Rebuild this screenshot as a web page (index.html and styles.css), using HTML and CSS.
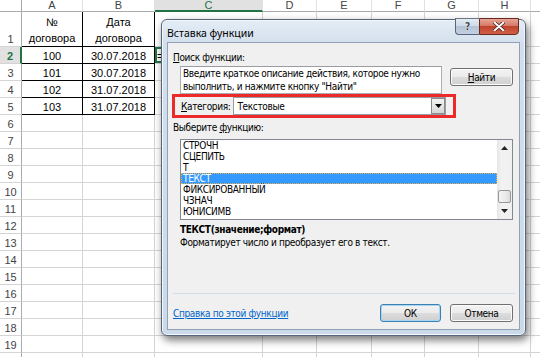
FILE: index.html
```html
<!DOCTYPE html>
<html lang="ru">
<head>
<meta charset="utf-8">
<title>Вставка функции</title>
<link rel="stylesheet" href="styles.css">
</head>
<body>
<div class="sheet">
  <div class="ch corner"></div><div class="ch">A</div><div class="ch">B</div><div class="ch selc">C</div><div class="ch">D</div><div class="ch">E</div><div class="ch">F</div><div class="ch">G</div><div class="ch">H</div><div class="ch"></div>
  <div class="rh">1</div><div class="t two">№<br>договора</div><div class="t two">Дата<br>договора</div><div></div><div></div><div></div><div></div><div></div><div></div><div></div>
  <div class="rh selr">2</div><div class="t">100</div><div class="t">30.07.2018</div><div class="act">=</div><div></div><div></div><div></div><div></div><div></div><div></div>
  <div class="rh">3</div><div class="t">101</div><div class="t">30.07.2018</div><div></div><div></div><div></div><div></div><div></div><div></div><div></div>
  <div class="rh">4</div><div class="t">102</div><div class="t">31.07.2018</div><div></div><div></div><div></div><div></div><div></div><div></div><div></div>
  <div class="rh">5</div><div class="t">103</div><div class="t">31.07.2018</div><div></div><div></div><div></div><div></div><div></div><div></div><div></div>
  <div class="rh">6</div><div></div><div></div><div></div><div></div><div></div><div></div><div></div><div></div><div></div>
  <div class="rh">7</div><div></div><div></div><div></div><div></div><div></div><div></div><div></div><div></div><div></div>
  <div class="rh">8</div><div></div><div></div><div></div><div></div><div></div><div></div><div></div><div></div><div></div>
  <div class="rh">9</div><div></div><div></div><div></div><div></div><div></div><div></div><div></div><div></div><div></div>
  <div class="rh">10</div><div></div><div></div><div></div><div></div><div></div><div></div><div></div><div></div><div></div>
  <div class="rh">11</div><div></div><div></div><div></div><div></div><div></div><div></div><div></div><div></div><div></div>
  <div class="rh">12</div><div></div><div></div><div></div><div></div><div></div><div></div><div></div><div></div><div></div>
  <div class="rh">13</div><div></div><div></div><div></div><div></div><div></div><div></div><div></div><div></div><div></div>
  <div class="rh">14</div><div></div><div></div><div></div><div></div><div></div><div></div><div></div><div></div><div></div>
  <div class="rh">15</div><div></div><div></div><div></div><div></div><div></div><div></div><div></div><div></div><div></div>
  <div class="rh">16</div><div></div><div></div><div></div><div></div><div></div><div></div><div></div><div></div><div></div>
  <div class="rh">17</div><div></div><div></div><div></div><div></div><div></div><div></div><div></div><div></div><div></div>
  <div class="rh">18</div><div></div><div></div><div></div><div></div><div></div><div></div><div></div><div></div><div></div>
  <div class="rh">19</div><div></div><div></div><div></div><div></div><div></div><div></div><div></div><div></div><div></div>
  <div class="rh"></div><div></div><div></div><div></div><div></div><div></div><div></div><div></div><div></div><div></div>
</div>

<div class="dlg">
  <div class="tbar">
    <span class="ttl">Вставка функции</span>
    <div class="cbtns">
      <span class="hbtn">?</span>
      <span class="xbtn"><svg width="12" height="9" viewBox="0 0 12 9"><path d="M1.5 0.5 L10.5 8.5 M10.5 0.5 L1.5 8.5" stroke="#3a1a14" stroke-width="3.4" stroke-linecap="round"/><path d="M1.5 0.5 L10.5 8.5 M10.5 0.5 L1.5 8.5" stroke="#ffffff" stroke-width="2" stroke-linecap="round"/></svg></span>
    </div>
  </div>
  <div class="body">
    <div class="lbl l1"><u>П</u>оиск функции:</div>
    <div class="srow">
      <div class="tarea">Введите краткое описание действия, которое нужно<br>выполнить, и нажмите кнопку "Найти"</div>
      <div class="btn find"><u>Н</u>айти</div>
    </div>
    <div class="crow">
      <span class="clbl"><u>К</u>атегория:</span>
      <div class="combo">
        <span class="cval">Текстовые</span>
        <span class="dd"><svg width="7" height="4" viewBox="0 0 7 4"><path d="M0 0 H7 L3.5 4 Z" fill="#000"/></svg></span>
      </div>
    </div>
    <div class="lbl l2">Выберите <u>ф</u>ункцию:</div>
    <div class="list">
      <div class="items">
        <div class="it">СТРОЧН</div>
        <div class="it">СЦЕПИТЬ</div>
        <div class="it">Т</div>
        <div class="it on">ТЕКСТ</div>
        <div class="it">ФИКСИРОВАННЫЙ</div>
        <div class="it">ЧЗНАЧ</div>
        <div class="it">ЮНИСИМВ</div>
      </div>
      <div class="sbar">
        <div class="sarr up"><svg width="7" height="4" viewBox="0 0 7 4"><path d="M0 4 H7 L3.5 0 Z" fill="#222"/></svg></div>
        <div class="strack"></div>
        <div class="thumb"></div>
        <div class="sarr dn"><svg width="7" height="4" viewBox="0 0 7 4"><path d="M0 0 H7 L3.5 4 Z" fill="#222"/></svg></div>
      </div>
    </div>
    <div class="syn">ТЕКСТ(значение;формат)</div>
    <div class="desc">Форматирует число и преобразует его в текст.</div>
    <div class="sep"></div>
    <div class="brow">
      <a class="link" href="#">Справка по этой функции</a>
      <div class="btn ok">ОК</div>
      <div class="btn cancel">Отмена</div>
    </div>
    <div class="redbox"></div>
  </div>
</div>
</body>
</html>
```

FILE: styles.css
```css
html, body {
  margin: 0;
  padding: 0;
}
body {
  width: 540px;
  height: 357px;
  overflow: hidden;
  position: relative;
  background: #ffffff;
  font-family: "Liberation Sans", Arial, sans-serif;
}

/* ---------- spreadsheet ---------- */
.sheet {
  display: grid;
  grid-template-columns: 22px 61px 72px 108px 54px 55px 53px 54px 52px 60px;
  grid-template-rows: 12px 35px;
  grid-auto-rows: 17px;
}
.sheet > div {
  box-sizing: border-box;
  border-right: 1px solid #d4d4d4;
  border-bottom: 1px solid #d4d4d4;
  font-size: 11px;
  line-height: 13px;
  color: #000;
  display: flex;
  align-items: flex-end;
  justify-content: center;
  white-space: nowrap;
  overflow: hidden;
}
.sheet > .ch {
  color: #444;
  align-items: center;
  line-height: 11px;
  border-right-color: #e1e1e1;
  border-bottom-color: #ababab;
}
.sheet > .corner {
  border-right-color: #ababab;
}
.sheet > .selc {
  background: #e1e1e1;
  color: #217346;
  border-bottom: 2px solid #217346;
}
.sheet > .rh {
  color: #444;
  border-right-color: #ababab;
  border-bottom-color: #d4d4d4;
}
.sheet > .selr {
  background: #e1e1e1;
  color: #217346;
  font-weight: bold;
  border-right: 2px solid #217346;
}
.sheet > .t {
  border-right-color: #000;
  border-bottom-color: #000;
}
.sheet > .two {
  text-align: center;
  line-height: 16px;
}
.sheet > .act {
  justify-content: flex-start;
  padding-left: 2px;
  box-shadow: inset 0 0 0 2px #217346;
}

/* ---------- dialog ---------- */
.dlg {
  position: absolute;
  left: 161px;
  top: 19px;
  width: 365px;
  height: 317px;
  box-sizing: border-box;
  border: 1px solid #56657a;
  border-radius: 6px;
  background: linear-gradient(180deg, #e4edf6 0px, #d3dfec 24px, #cbd9e9 100%);
  box-shadow: 2px 4px 8px rgba(0, 0, 0, 0.55), inset 0 0 0 1px #f2f7fc;
  display: flex;
  flex-direction: column;
  font-family: "DejaVu Sans Condensed", "DejaVu Sans", sans-serif;
  font-stretch: condensed;
  font-size: 10px;
  letter-spacing: -0.35px;
  color: #000;
}
.tbar {
  height: 22px;
  flex: none;
  display: flex;
  align-items: flex-start;
  padding-left: 5px;
}
.ttl {
  flex: 1;
  font-family: "Noto Sans", "Open Sans", sans-serif;
  font-stretch: normal;
  font-size: 10.5px;
  letter-spacing: 0;
  line-height: 14px;
  padding-top: 6px;
}
.cbtns {
  display: flex;
  margin-top: -2px;
  margin-right: 6px;
}
.hbtn, .xbtn {
  box-sizing: border-box;
  height: 17px;
  display: flex;
  align-items: center;
  justify-content: center;
  border: 1px solid #58667a;
  border-top-color: #6a7788;
}
.hbtn {
  width: 24px;
  border-radius: 0 0 0 4px;
  border-right: none;
  background: linear-gradient(180deg, #e3ebf3 0%, #cfdbe7 45%, #b3c3d5 50%, #c2d1e1 100%);
  font-family: "DejaVu Sans", sans-serif;
  font-weight: bold;
  font-size: 10px;
  letter-spacing: 0;
  color: #3b4656;
  text-shadow: 0 0 1px #fff, 0 0 1px #fff;
}
.xbtn {
  width: 40px;
  border-radius: 0 0 4px 0;
  border-color: #6b2a1f;
  background: linear-gradient(180deg, #e8a597 0%, #d47966 45%, #c0432b 50%, #d0604a 100%);
}

.body {
  flex: 1;
  position: relative;
  margin: 0 5px 5px 5px;
  border: 1px solid #8fa1b7;
  background: #f0f0f0;
  padding: 0 6px 0 5px;
  display: flex;
  flex-direction: column;
}
.lbl {
  line-height: 13px;
  height: 13px;
}
.l1 { margin-top: 8px; }
.l2 { margin-top: 6px; }
u { text-decoration: underline; text-underline-offset: 1px; }

.srow {
  display: flex;
  align-items: flex-start;
  margin-top: 2px;
}
.tarea {
  box-sizing: border-box;
  width: 262px;
  height: 28px;
  margin-left: 7px;
  background: #fff;
  border: 1px solid #abadb3;
  border-top-color: #9a9ca2;
  padding: 0 0 0 2px;
  line-height: 13px;
  white-space: nowrap;
  overflow: hidden;
}
.btn {
  box-sizing: border-box;
  height: 18px;
  border: 1px solid #707070;
  border-radius: 3px;
  background: linear-gradient(180deg, #f3f3f3 0%, #ebebeb 48%, #dcdcdc 52%, #d0d0d0 100%);
  box-shadow: inset 0 0 0 1px #fbfbfb;
  display: flex;
  align-items: center;
  justify-content: center;
  line-height: 13px;
}
.find {
  width: 63px;
  margin-left: auto;
  margin-top: 2px;
}
.crow {
  display: flex;
  align-items: center;
  margin-top: 3px;
  height: 18px;
}
.clbl {
  margin-left: 8px;
  margin-right: 3px;
  white-space: nowrap;
}
.combo {
  box-sizing: border-box;
  width: 213px;
  height: 18px;
  background: #fff;
  border: 1px solid #9a9ca2;
  display: flex;
  align-items: center;
  padding-left: 3px;
}
.cval { flex: 1; }
.dd {
  box-sizing: border-box;
  width: 14px;
  height: 16px;
  border: 1px solid #8b8b8b;
  background: linear-gradient(180deg, #f2f2f2 0%, #e6e6e6 50%, #d6d6d6 100%);
  display: flex;
  align-items: center;
  justify-content: center;
}

.list {
  box-sizing: border-box;
  height: 81px;
  margin-top: 5px;
  margin-left: 7px;
  border: 1px solid #828790;
  background: #fff;
  display: flex;
}
.items {
  flex: 1;
}
.it {
  box-sizing: border-box;
  height: 11px;
  line-height: 11px;
  padding-left: 2px;
  white-space: nowrap;
}
.it.on {
  background: #3399ff;
  color: #fff;
  outline: 1px dotted #e9b04a;
  outline-offset: -1px;
}
.sbar {
  width: 15px;
  flex: none;
  display: flex;
  flex-direction: column;
  background: linear-gradient(90deg, #e6e6e6 0%, #f2f2f2 30%, #f0f0f0 100%);
}
.sarr {
  display: flex;
  align-items: center;
  justify-content: center;
}
.up { height: 16px; }
.dn { height: 15px; }
.strack { height: 34px; }
.thumb {
  box-sizing: border-box;
  height: 13px;
  margin: 0 1px;
  border: 1px solid #979797;
  border-radius: 2px;
  background: linear-gradient(90deg, #f4f4f4 0%, #ececec 50%, #dddddd 100%);
}

.syn {
  margin-top: 3px;
  margin-left: 7px;
  font-weight: bold;
  line-height: 13px;
}
.desc {
  margin-left: 7px;
  line-height: 13px;
}
.sep {
  margin-top: 44px;
  margin-right: -2px;
  height: 1px;
  background: #d3dde7;
}
.brow {
  display: flex;
  align-items: center;
  margin-top: 10px;
}
.link {
  flex: 1;
  color: #0066cc;
  text-decoration: underline;
  line-height: 13px;
}
.ok {
  width: 61px;
  border-color: #3c7fb1;
  box-shadow: inset 0 0 0 1px #a6d6f4;
}
.cancel {
  width: 63px;
  margin-left: 9px;
}
.redbox {
  position: absolute;
  left: 4px;
  top: 51px;
  width: 284px;
  height: 24px;
  box-sizing: border-box;
  border: 3px solid #ec2a2a;
}
```
